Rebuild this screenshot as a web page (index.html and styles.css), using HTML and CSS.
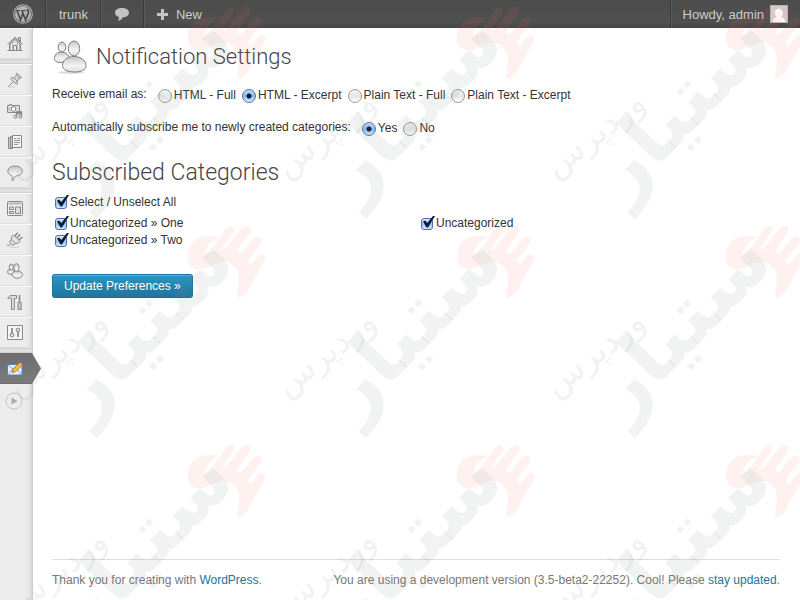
FILE: index.html
```html
<!DOCTYPE html>
<html lang="en">
<head>
  <meta charset="UTF-8">
  <meta name="viewport" content="width=device-width, initial-scale=1">
  <title>Notification Settings</title>
  <link rel="stylesheet" href="styles.css">
</head>
<body>

  <!-- Admin bar -->
  <header class="adminbar">
    <a class="bar-item bar-logo" href="#" aria-label="WordPress">
      <svg width="20" height="20" viewBox="0 0 20 20">
        <circle cx="10" cy="10" r="9.3" fill="none" stroke="#b4b4b4" stroke-width="1.1"/>
        <circle cx="10" cy="10" r="8" fill="#b4b4b4"/>
        <path d="M2.8 6.6h4.6M8.3 6.6h5" stroke="#4a4a4a" stroke-width="1"/>
        <path d="M4.1 6.8L7.5 16 10 8.8M9 6.8L12.6 16 15.4 8.6C15.9 7 14 6.4 14.8 4.8" fill="none" stroke="#4a4a4a" stroke-width="1.7"/>
      </svg>
    </a>
    <a class="bar-item bar-site" href="#">trunk</a>
    <a class="bar-item bar-comments" href="#" aria-label="Comments">
      <svg width="16" height="16" viewBox="0 0 16 16">
        <path d="M8 2C12 2 15 4 15 6.8S12 11.4 8.6 11.4C8 13.4 6 14.6 3.8 14.8 4.8 13.6 5 12.4 4.8 11 2.4 10.2 1 8.8 1 6.8 1 4 4 2 8 2z" fill="#c2c2c2"/>
      </svg>
    </a>
    <a class="bar-item bar-new" href="#">
      <svg width="11" height="11" viewBox="0 0 11 11"><path d="M4 0h3v4h4v3H7v4H4V7H0V4h4z" fill="#c4c4c4"/></svg>
      New
    </a>
    <a class="bar-item bar-account" href="#">
      Howdy, admin
      <svg width="18" height="18" viewBox="0 0 18 18">
        <path d="M0 0h18v18H0z" fill="#b5b5b5"/>
        <path d="M1 1h16v16H1z" fill="#d3cccc"/>
        <path d="M3 17c0-3 1.500-4.500 4-5C5.600 11 5 9.600 5 7.800 5 5.400 6.800 3.700 9 3.700s4 1.700 4 4.100c0 1.800-.6 3.200-2 4.200 2.500.5 4 2 4 5z" fill="#fff"/>
      </svg>
    </a>
  </header>

  <div class="wrap">

    <nav class="menu" aria-label="Main menu">
      <a class="menu-item" href="#" aria-label="Dashboard">
        <svg class="icon" viewBox="0 0 16 16">
          <path d="M2.500 7.500v7h11v-7L8 2.500z" fill="#eee"/>
          <path d="M11.500 1.500h2v4l-2-2zM.7 8.300L8 1.300l7.300 7" fill="#ddd"/>
          <path d="M3.500 7v7M5.500 5.500V14M10.500 5.500V14M12.500 7v7" stroke="#bbb"/>
          <path d="M.7 8.300L8 1.300l7.300 7M3 8L8 3.300 13 8M2.500 8v6.500M13.500 8v6.500M11.500 3.500v-2h2v4M6.500 14.500v-5h3v5M.5 14.500h15"/>
        </svg>
      </a>
      <div class="menu-sep"></div>
      <a class="menu-item" href="#" aria-label="Posts">
        <svg class="icon" viewBox="0 0 16 16">
          <path d="M1 15h7" stroke="#ccc"/>
          <path d="M6 10L1.300 14.500"/>
          <path d="M9.800 1.200l4.800 4.300-1.300.9-1-.3-2.200 3 .4 2.300-1.300.8-5.700-5.400 1-1.200 2.200.2L9.700 3.500l-.7-1z" fill="#ddd"/>
          <path d="M9.700 3.500l2.600 2.600M6.700 5.800l3.400 3.300"/>
        </svg>
      </a>
      <a class="menu-item" href="#" aria-label="Media">
        <svg class="icon" viewBox="0 0 16 16">
          <path d="M.5 2.500h2v-1h2v1h8v7H.5z" fill="#ddd"/>
          <circle cx="6.500" cy="6" r="2.300" fill="#fff"/>
          <path d="M2 4.500v3" stroke="#aaa"/>
          <path d="M9.500 13.500V9h5v4.500M9.500 10.500h5" stroke-width="1.300"/>
          <circle cx="8.300" cy="13.700" r="1.500" fill="#ddd"/>
          <circle cx="13.300" cy="13.700" r="1.500" fill="#ddd"/>
        </svg>
      </a>
      <a class="menu-item" href="#" aria-label="Pages">
        <svg class="icon" viewBox="0 0 16 16">
          <path d="M1.500 3.500h4v11h-4z" fill="#ccc"/>
          <path d="M3.500 2.500h4v11h-4z" fill="#ccc"/>
          <path d="M5.500 1.500h9v12h-9z" fill="#f2f2f2"/>
          <path d="M7 4.500h2M10 4.500h3M7 6.500h6M7 8.500h6M7 10.500h4" stroke="#999"/>
        </svg>
      </a>
      <a class="menu-item" href="#" aria-label="Comments">
        <svg class="icon" viewBox="0 0 16 16">
          <path d="M4 15.500h4" stroke="#bbb"/>
          <path d="M8.200 1c4 0 7 2 7 5s-3 5-6.200 5c-.9 0-1.500 3.200-4 3.800.8-1.300.6-2.700-.2-4.200C2.300 9.800.9 8.300.9 6c0-3 3.300-5 7.300-5z" fill="url(#grey)"/>
        </svg>
      </a>
      <div class="menu-sep"></div>
      <a class="menu-item" href="#" aria-label="Appearance">
        <svg class="icon" viewBox="0 0 16 16">
          <rect x=".5" y=".5" width="15" height="14" rx="1" fill="#eee"/>
          <path d="M1.500 2.500h13" stroke="#b5b5b5" stroke-width="2"/>
          <path d="M2.500 6h4v2.500h-4zM2.500 10.500h4v2h-4zM8.500 6h5v6.500h-5z" fill="#ddd"/>
        </svg>
      </a>
      <a class="menu-item" href="#" aria-label="Plugins">
        <svg class="icon" viewBox="0 0 16 16">
          <path d="M3 15.300h9" stroke="#ccc"/>
          <path d="M4 11.800c-1.500 2-4 2.800-3.300.8"/>
          <path d="M10.800.8L7.800 4M13.200 2.500L10 5.800M15.300 5l-3.500 3.200" stroke-width="1.500"/>
          <path d="M6.300 2.800l6.900 6.500c-1.200 1.500-2.800 2.200-4.700 2.200L6 13.500 2.300 10l2-2.500c0-2 .7-3.500 2-4.700z" fill="#e2e2e2"/>
          <path d="M4.300 7.500l4.200 4"/>
        </svg>
      </a>
      <a class="menu-item" href="#" aria-label="Users">
        <svg class="icon" viewBox="0 0 16 16">
          <ellipse cx="3.800" cy="8.800" rx="3.300" ry="2.600" fill="url(#grey)"/>
          <ellipse cx="4.300" cy="4" rx="2" ry="3" fill="url(#grey)"/>
          <ellipse cx="10.300" cy="11.600" rx="5.200" ry="3.700" fill="url(#grey)"/>
          <ellipse cx="9.500" cy="4.600" rx="2.600" ry="4" fill="url(#grey)"/>
        </svg>
      </a>
      <a class="menu-item" href="#" aria-label="Tools">
        <svg class="icon" viewBox="0 0 16 16">
          <path d="M.8 4.500C1.500 2.300 3 1.500 5 1.500h4.500v3H7.300v11H4.500v-11C3 4 2 4 .8 4.500z" fill="#ddd"/>
          <path d="M12.500 1v7" stroke-width="1.600"/>
          <path d="M11 8.500h3.200v7H11z" fill="#ccc"/>
        </svg>
      </a>
      <a class="menu-item" href="#" aria-label="Settings">
        <svg class="icon" viewBox="0 0 16 16">
          <path d="M.5.500h15v14H.5z" fill="#f5f5f5"/>
          <path d="M5 3v6M11 6v6" stroke="#777" stroke-width="1.500"/>
          <circle cx="5" cy="10" r="1.900" fill="#ddd"/>
          <circle cx="11" cy="5" r="1.900" fill="#ddd"/>
        </svg>
      </a>
      <div class="menu-sep"></div>
      <a class="menu-item current" href="#" aria-label="Subscribe2">
        <svg class="icon" viewBox="0 0 16 16">
          <path d="M.5 3.500h14.500v10.500H.5z" fill="#e6f0fc" stroke="#4b86d0"/>
          <path d="M1 4l6.500 5.500L14.500 4M1 13.500l4.500-5.200M14.500 13.500L10 8.500" stroke="#7fb0e6"/>
          <path d="M6 8L12.700 1.700l2.500 2.500L8.600 10.600 5 11.500z" fill="#f6c04a" stroke="#b8791e"/>
          <path d="M12 2.500L13.200 1.300l2.300 2.400-1.200 1.100z" fill="#e59a77" stroke="none"/>
        </svg>
      </a>
      <button class="collapse" type="button" aria-label="Collapse menu">
        <svg width="18" height="18" viewBox="0 0 18 18">
          <circle cx="9" cy="9" r="8" fill="#ececec" stroke="#c4c4c4"/>
          <path d="M6.500 5.500L12.500 9l-6 3.500z" fill="#aaa"/>
        </svg>
      </button>
    </nav>

    <div class="content">
      <main>
        <form>
          <h1>
            <svg width="36" height="34" viewBox="0 0 36 34">
              <ellipse cx="19" cy="32.500" rx="13" ry="1.500" fill="#ddd"/>
              <g fill="url(#grey)" stroke="#808080">
                <path d="M2.500 18.500c0-3.500 2.500-6.500 7-6.500s7.500 3 7.500 6.500-3 4-7.500 4-7-1-7-4z"/>
                <ellipse cx="10" cy="7" rx="3.800" ry="5"/>
                <path d="M10.500 25.500c0-5 4.500-9 11.500-9s12 4 12 9.500c0 4-5 6-11.500 6s-12-2-12-6.500z"/>
                <ellipse cx="22" cy="8.500" rx="5.700" ry="7.500"/>
              </g>
            </svg>
            Notification Settings
          </h1>

          <fieldset class="options">
            <legend>Receive email as:</legend>
            <label><input type="radio" name="format">HTML - Full</label>
            <label><input type="radio" name="format" checked>HTML - Excerpt</label>
            <label><input type="radio" name="format">Plain Text - Full</label>
            <label><input type="radio" name="format">Plain Text - Excerpt</label>
          </fieldset>

          <fieldset class="options">
            <legend>Automatically subscribe me to newly created categories:</legend>
            <label><input type="radio" name="autosub" checked>Yes</label>
            <label><input type="radio" name="autosub">No</label>
          </fieldset>

          <h2>Subscribed Categories</h2>
          <label class="cat cat-all"><input type="checkbox" checked>Select / Unselect All</label>
          <div class="cats">
            <div>
              <label class="cat"><input type="checkbox" checked>Uncategorized » One</label>
              <label class="cat"><input type="checkbox" checked>Uncategorized » Two</label>
            </div>
            <div>
              <label class="cat"><input type="checkbox" checked>Uncategorized</label>
            </div>
          </div>

          <button class="button-primary" type="submit">Update Preferences »</button>
        </form>
      </main>

      <footer>
        <span>Thank you for creating with <a href="#">WordPress</a>.</span>
        <span>You are using a development version (3.5-beta2-22252). Cool! Please <a href="#">stay updated</a>.</span>
      </footer>
    </div>
  </div>

  <!-- Watermark tiled over the whole page -->
  <svg class="watermark" aria-hidden="true">
    <defs>
      <linearGradient id="grey" x1="0" y1="0" x2="0" y2="1">
        <stop offset="0" stop-color="#c4c4c4"/>
        <stop offset=".6" stop-color="#f4f4f4"/>
        <stop offset="1" stop-color="#dcdcdc"/>
      </linearGradient>
      <pattern id="mark" x="1" y="3" width="269" height="219" patternUnits="userSpaceOnUse">
        <g class="hand">
          <path d="M187 37C186 24 193 14 208 14c4 0 8 1 11 1-8 2-14 9-16 18 14-7 28-9 38 0 12 10 13 22 9 30-3 7-7 11-12 13-3-2-2-5-1-9 4-15-2-25-12-27-9-2-15 6-25 7-7 1-12-3-13-10z"/>
          <path d="M211 27L225 7c4-5 9-3 8 2L219 29zM223 29L240 7c5-6 11-3 9 3L233 33zM237 35L252 17c4-5 10-2 8 4L245 41zM247 47L257 34c4-4 9-1 7 4L251 61z"/>
        </g>
        <text class="mark-big" transform="translate(84 200) rotate(-46)">ستیار</text>
        <text class="mark-small" transform="translate(16 176) rotate(-38)">وردپرس</text>
      </pattern>
    </defs>
    <rect width="100%" height="100%" fill="url(#mark)"/>
  </svg>

</body>
</html>
```
FILE: styles.css
```css
* {
  box-sizing: border-box;
}

body {
  margin: 0;
  min-height: 100vh;
  display: flex;
  flex-direction: column;
  position: relative;
  background: #fff;
  color: #333;
  font-family: "Liberation Sans", Arial, sans-serif;
  font-size: 12px;
  line-height: 17px;
}

a {
  color: #21759b;
  text-decoration: none;
}

/* admin bar */
.adminbar {
  display: flex;
  height: 28px;
  background: linear-gradient(#4c4c4c, #505050 80%, #444);
  font-size: 13px;
}

.bar-item {
  display: flex;
  align-items: center;
  color: #ccc;
  border-right: 1px solid #3a3a3a;
  box-shadow: 1px 0 0 #5c5c5c;
}

.bar-logo {
  padding: 0 12px 0 13px;
}

.bar-site {
  padding: 0 12px 0 13px;
}

.bar-comments {
  padding: 0 13px;
}

.bar-new {
  gap: 8px;
  padding: 0 13px;
  border: none;
  box-shadow: none;
}

.bar-account {
  gap: 6px;
  margin-left: auto;
  padding: 0 12px;
  border-right: none;
  border-left: 1px solid #3a3a3a;
  box-shadow: inset 1px 0 0 #5c5c5c;
}

/* menu */
.wrap {
  display: flex;
  flex: 1;
}

.menu {
  width: 33px;
  flex-shrink: 0;
  background: #ececec;
  border-right: 1px solid #ccc;
  box-shadow: inset -5px 0 5px -4px #ccc;
}

.menu-item {
  display: flex;
  align-items: center;
  height: 31px;
  padding-left: 7px;
  border-top: 1px solid #f9f9f9;
  border-bottom: 1px solid #dfdfdf;
}

.menu-sep {
  height: 5px;
  background: #dfdfdf;
  border-top: 1px solid #d0d0d0;
  border-bottom: 1px solid #cfcfcf;
}

.icon {
  width: 16px;
  height: 16px;
  fill: none;
  stroke: #888;
}

.current {
  position: relative;
  background: linear-gradient(#6d6d6d, #7b7b7b);
  border-color: #6d6d6d;
}

.current::after {
  content: "";
  position: absolute;
  left: 100%;
  top: -1px;
  width: 9px;
  height: 31px;
  background: linear-gradient(#6d6d6d, #7b7b7b);
  clip-path: polygon(0 0, 100% 50%, 0 100%);
}

.collapse {
  display: block;
  margin: 8px 0 0 5px;
  padding: 0;
  border: none;
  background: none;
  line-height: 0;
}

/* content */
.content {
  flex: 1;
  display: flex;
  flex-direction: column;
  padding: 12px 20px 0 19px;
}

h1,
h2 {
  margin: 0;
  color: #464646;
  font-family: Roboto, sans-serif;
  font-size: 23px;
  font-weight: 300;
  line-height: 34px;
}

h1 {
  display: flex;
  gap: 8px;
  margin-bottom: 12px;
  font-size: 22px;
}

h2 {
  margin: 20px 0 4px;
}

.options {
  display: flex;
  align-items: center;
  height: 17px;
  margin: 0 0 16px;
  padding: 0;
  border: none;
}

.options legend {
  float: left;
  padding: 0;
  margin-right: 11px;
}

.options label {
  display: flex;
  align-items: center;
  gap: 2px;
  padding-top: 2px;
  margin-right: 6px;
}

input {
  appearance: none;
  flex-shrink: 0;
  margin: 0;
}

input[type="radio"] {
  width: 14px;
  height: 14px;
  border: 1px solid #999;
  border-radius: 50%;
  background: linear-gradient(#f2f2f2, #e6e6e6 50%, #fff);
}

input[type="radio"]:checked {
  border-color: #5a6ca8;
  background: radial-gradient(circle, #0c1a38 2px, transparent 3px),
              linear-gradient(#c4daf4, #86bbee 50%, #cdf0ff);
}

input[type="checkbox"] {
  position: relative;
  width: 12px;
  height: 12px;
  margin-left: 3px;
  border: 1px solid #5a6ca8;
  border-radius: 3px;
  background: linear-gradient(#dceafa, #95c3f0 50%, #c6ecff);
}

input[type="checkbox"]:checked::after {
  content: "";
  position: absolute;
  left: 1px;
  top: -3px;
  width: 12px;
  height: 12px;
  background: #0c1a38;
  clip-path: polygon(0 50%, 17% 42%, 36% 62%, 86% 0, 100% 5%, 42% 100%, 30% 100%);
}

.cat {
  display: flex;
  align-items: center;
  gap: 3px;
}

.cat-all {
  margin-bottom: 4px;
}

.cats {
  display: grid;
  grid-template-columns: 1fr 1fr;
  gap: 4px;
  margin-bottom: 25px;
}

.button-primary {
  height: 24px;
  padding: 0 11px;
  border: 1px solid #21759b;
  border-bottom-color: #1e6a8d;
  border-radius: 3px;
  background: linear-gradient(#2a95c5, #21759b);
  box-shadow: inset 0 1px 0 rgba(120, 200, 230, 0.5);
  color: #fff;
  font: inherit;
  text-shadow: 0 1px 0 rgba(0, 0, 0, 0.1);
}

footer {
  display: flex;
  justify-content: space-between;
  margin-top: auto;
  padding: 12px 0 11px;
  border-top: 1px solid #dfdfdf;
  color: #777;
}

/* watermark */
.watermark {
  position: absolute;
  top: 0;
  left: 0;
  width: 100%;
  height: 100%;
  pointer-events: none;
}

.hand {
  fill: #f06050;
  opacity: 0.09;
}

.mark-big,
.mark-small {
  fill: #7c908a;
  opacity: 0.11;
  font-family: "DejaVu Sans", sans-serif;
}

.mark-big {
  font-size: 80px;
  font-weight: bold;
}

.mark-small {
  font-size: 34px;
}
```
